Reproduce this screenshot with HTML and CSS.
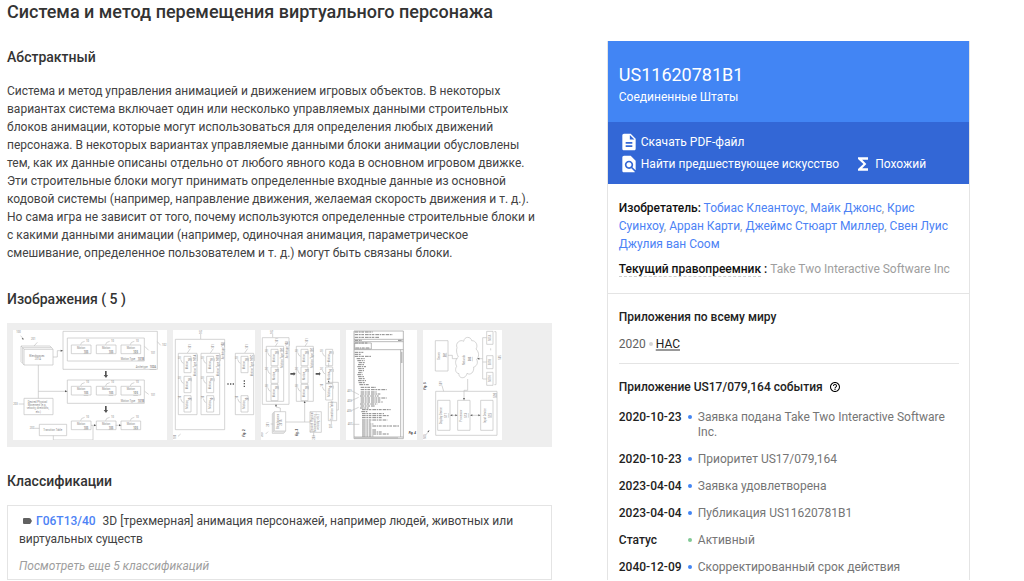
FILE: index.html
```html
<!DOCTYPE html>
<html lang="ru">
<head>
<meta charset="utf-8">
<meta name="viewport" content="width=device-width, initial-scale=1">
<title>US11620781B1</title>
<link rel="stylesheet" href="styles.css">
</head>
<body>
<svg class="defs" aria-hidden="true">
  <symbol id="motion" viewBox="0 0 76 46" overflow="visible">
    <path d="M8 18h59v26H8zM36 17q0-8 12-10"/>
    <text x="25" y="30">Motion</text><text x="45" y="41" class="u">105</text><text x="52" y="8">10</text>
  </symbol>
  <symbol id="vmotion" viewBox="0 0 40 60" overflow="visible">
    <path d="M14 8h21v49H14zM13 29q-6 0-9-12"/>
    <text transform="translate(26 47) rotate(-90)">Motion</text><text transform="translate(34 23) rotate(-90)" class="u">10</text><text transform="translate(5 17) rotate(-90)">10</text>
  </symbol>
</svg>
<main class="page">
  <h1 class="title">Система и метод перемещения виртуального персонажа</h1>
  <div class="columns">
    <div class="content">
      <section class="abstract">
        <h2 class="heading">Абстрактный</h2>
        <p class="text">Система и метод управления анимацией и движением игровых объектов. В некоторых вариантах система включает один или несколько управляемых данными строительных блоков анимации, которые могут использоваться для определения любых движений персонажа. В некоторых вариантах управляемые данными блоки анимации обусловлены тем, как их данные описаны отдельно от любого явного кода в основном игровом движке. Эти строительные блоки могут принимать определенные входные данные из основной кодовой системы (например, направление движения, желаемая скорость движения и т. д.). Но сама игра не зависит от того, почему используются определенные строительные блоки и с какими данными анимации (например, одиночная анимация, параметрическое смешивание, определенное пользователем и т. д.) могут быть связаны блоки.</p>
      </section>
      <section class="images">
        <h2 class="heading">Изображения ( 5 )</h2>
        <div class="strip">
          <svg class="figure" width="154" height="110" viewBox="39 45 462 330" role="img" aria-label="Fig. 1">
            <path d="M189 49h283v114H189zM202 69h231v69H202zM202 195h231v70H202zM72 103h87v47H72zM72 103l-4-5v47l4 5M68 98h87l4 5M68 98l-5-5v47l5 5M63 93h87l5 5M72 250h87v49H72zM118 328h82v34h-82z"/>
            <path d="M159 126h13v-19h17M115 150v100M115 229h87M273 331h15M347 331h17M160 362v13h119v-44M112 82l-10 11M434 94l12 12M472 80l10 11M434 229l12 9M56 267h16M100 340h18M62 62l8 10"/>
            <path class="solid" d="M315 168h5v12h4l-6 9-7-9h4zM315 273h5v12h4l-6 9-7-9h4zM189 107l-7-3v6zM202 229l-7-3v6zM289 331l-7-3v6zM364 331l-7-3v6zM71 74l-6-2 4-4z"/>
            <use href="#motion" x="206" y="72" width="76" height="46"/><use href="#motion" x="281" y="72" width="76" height="46"/><use href="#motion" x="355" y="72" width="76" height="46"/>
            <use href="#motion" x="206" y="196" width="76" height="46"/><use href="#motion" x="281" y="196" width="76" height="46"/><use href="#motion" x="355" y="196" width="76" height="46"/>
            <use href="#motion" x="206" y="300" width="76" height="46"/><use href="#motion" x="281" y="300" width="76" height="46"/><use href="#motion" x="355" y="300" width="76" height="46"/>
            <text x="49" y="53">100</text><text x="93" y="75">201</text><text x="452" y="116">101</text><text x="486" y="94">102</text><text x="452" y="242">101</text><text x="40" y="270">203</text><text x="89" y="343">207</text>
            <text x="88" y="125">Blendspaces</text><text x="104" y="136">201A</text>
            <text x="362" y="134">Motion Type</text><text x="413" y="134" class="u">101B</text><text x="407" y="159">Archetype</text><text x="449" y="159" class="u">102A</text><text x="362" y="260">Motion Type</text><text x="413" y="260" class="u">101B</text>
            <text x="83" y="263">Desired Physical</text><text x="83" y="273">Movement (e.g.,</text><text x="80" y="283">velocity, directions,</text><text x="107" y="293">etc.)</text><text x="130" y="348">Transition Table</text>
          </svg>
          <svg class="figure" width="82" height="110" viewBox="24 45 246 330" role="img" aria-label="Fig. 2">
            <path d="M31 73h148v271H31zM40 115h56v184H40zM108 115h56v184h-56zM211 115h55v184h-55zM107 57v15M76 101l-9 13M145 101l-9 13M248 101l-9 13M39 364l8-7"/>
            <path class="solid" d="M187 205h4v4h-4zM195 205h4v4h-4zM203 205h4v4h-4zM236 196h4v4h-4zM236 204h4v4h-4zM236 212h4v4h-4z"/>
            <use href="#vmotion" x="43" y="116" width="40" height="60"/><use href="#vmotion" x="43" y="176" width="40" height="60"/><use href="#vmotion" x="43" y="234" width="40" height="60"/>
            <use href="#vmotion" x="111" y="116" width="40" height="60"/><use href="#vmotion" x="111" y="176" width="40" height="60"/><use href="#vmotion" x="111" y="234" width="40" height="60"/>
            <use href="#vmotion" x="214" y="116" width="40" height="60"/><use href="#vmotion" x="214" y="234" width="40" height="60"/>
            <text transform="translate(94 184) rotate(-90)">Motion Type <tspan class="u">101A</tspan></text><text transform="translate(162 184) rotate(-90)">Motion Type <tspan class="u">101B</tspan></text><text transform="translate(264 184) rotate(-90)">Motion Type <tspan class="u">101C</tspan></text><text transform="translate(176 133) rotate(-90)">Archetype <tspan class="u">102</tspan></text>
            <text transform="translate(110 57) rotate(-90)">102</text><text transform="translate(79 101) rotate(-90)">101</text><text transform="translate(148 101) rotate(-90)">101</text><text transform="translate(250 101) rotate(-90)">101</text><text transform="translate(32 373) rotate(-90)">100</text><text class="fig" transform="translate(239 365) rotate(-90)">Fig. 2</text>
          </svg>
          <svg class="figure" width="79" height="110" viewBox="288 45 237 330" role="img" aria-label="Fig. 3">
            <path d="M292 68h80v200h-80zM304 94h52v165h-52zM394 94h51v165h-51zM328 290h34v58h-34zM328 290l-3 3v58h34l3-3M325 293l-3 4v58h34l3-4M435 290h34v62h-34zM490 262h25v55h-25z"/>
            <path d="M346 290v-11l-13-3v-8M362 321h73M419 321v-62M491 202h29v83h-5M323 57v10M338 83l-7 11M427 83l-7 11M491 156v-13M491 208v-12M317 327h8M446 352v13M499 317v11M302 357l7-7"/>
            <path class="solid" d="M376 174h10v-3l6 5-6 6v-3h-10zM452 174h10v-3l5 5-5 6v-3h-10zM419 258l-3 6h6zM333 268l-3 6h6zM491 197l-3 5h6z"/>
            <use href="#vmotion" x="304" y="95" width="40" height="60"/><use href="#vmotion" x="304" y="148" width="40" height="60"/><use href="#vmotion" x="304" y="200" width="40" height="60"/>
            <use href="#vmotion" x="394" y="95" width="40" height="60"/><use href="#vmotion" x="394" y="148" width="40" height="60"/><use href="#vmotion" x="394" y="200" width="40" height="60"/>
            <use href="#vmotion" x="468" y="95" width="40" height="60"/><use href="#vmotion" x="468" y="148" width="40" height="60"/><use href="#vmotion" x="468" y="198" width="40" height="60"/>
            <text transform="translate(369 130) rotate(-90)">Archetype <tspan class="u">102</tspan></text><text transform="translate(353 158) rotate(-90)">Motion Type <tspan class="u">101</tspan></text><text transform="translate(443 158) rotate(-90)">Motion Type <tspan class="u">101</tspan></text>
            <text transform="translate(342 342) rotate(-90)">Blendspaces</text><text transform="translate(352 332) rotate(-90)">201A</text><text transform="translate(445 350) rotate(-90)">Desired Physical</text><text transform="translate(453 350) rotate(-90)">Movement (e.g.,</text><text transform="translate(461 344) rotate(-90)">velocity, etc.)</text><text transform="translate(505 315) rotate(-90)">Transition Table</text>
            <text transform="translate(325 57) rotate(-90)">102</text><text transform="translate(340 83) rotate(-90)">101</text><text transform="translate(429 83) rotate(-90)">101</text><text transform="translate(312 335) rotate(-90)">201</text><text transform="translate(295 366) rotate(-90)">200</text><text transform="translate(449 374) rotate(-90)">203</text><text transform="translate(502 340) rotate(-90)">207</text><text class="fig" transform="translate(400 363) rotate(-90)">Fig. 3</text>
          </svg>
          <svg class="figure" width="71" height="110" viewBox="18 45 213 330" role="img" aria-label="Fig. 4">
            <path class="window" d="M42 48h148v323H42zM42 73h148M42 80h148M44 84h50v18H44zM42 104h148M182 104v262M42 366h148"/>
            <path class="bar" d="M185 110v34M44 369h130"/>
            <path class="rows" d="M44 51h54M44 59h114M44 67h74M44 76h22M174 76h14M44 84h38M46 99h44M44 112h26M44 118h20M44 124h50M50 131h24M52 137h22M56 143h18M54 149h20M52 155h26M54 161h18M56 167h16M54 173h14M52 179h16M54 185h18M56 191h20M54 197h24M56 203h18M58 209h28M62 217h46M62 224h78M62 231h48M62 237h60M60 243h56M62 249h78M62 255h62M62 261h66M60 267h52M62 273h42M60 279h26M66 284h86M64 290h18M66 296h66M66 302h80M66 308h60M66 315h76M66 321h26M66 327h34M66 333h112M66 339h30M66 345h44M66 351h60M66 357h80M66 363h34"/>
            <path d="M34 227l23 12M34 257l22-10M34 287l22-10M35 328h23"/>
            <text x="22" y="230">401</text><text x="22" y="260">403</text><text x="21" y="290">405</text><text x="23" y="331">407</text><text class="fig" x="206" y="358">Fig. 4</text>
          </svg>
          <svg class="figure" width="79" height="110" viewBox="251 45 237 330" role="img" aria-label="Fig. 5">
            <path d="M288 77h38v91h-38zM442 49h19v39h-19zM442 122h19v39h-19zM442 172h19v39h-19zM289 229h184v132H289zM295 256h37v90h-37zM355 256h37v90h-37zM424 256h37v90h-37z"/>
            <path d="M353 98c-6-14 10-26 20-19 2-16 22-15 24-2 13-1 20 15 13 25 11 11 9 24 2 31 6 12-2 22-9 23 2 16-10 26-20 19-4 19-26 16-24 1-12-2-12-15-7-22-6-11-3-22 5-28-5-10-7-19-4-28z"/>
            <path d="M326 121h13v10h15M414 131h16M442 68h-12v124h12M430 141h12M385 192v34h-11v30M332 301h23M392 301h32M465 50h5v159h-5M308 212l5 17M259 360l11-13M454 100v6"/>
            <path class="solid" d="M333 301l6-3v6zM354 301l-6-3v6zM393 301l6-3v6zM423 301l-6-3v6zM374 255l-3-6h6zM414 131l6-3v6zM270 346l-6 3 4 3z"/>
            <text transform="translate(301 134) rotate(-90)">Server</text><text transform="translate(319 127) rotate(-90)" class="u">501</text><text transform="translate(378 150) rotate(-90)">Network</text><text transform="translate(395 139) rotate(-90)" class="u">503</text>
            <text transform="translate(455 78) rotate(-90)">507A</text><text transform="translate(455 151) rotate(-90)">507B</text><text transform="translate(455 201) rotate(-90)">507N</text><text transform="translate(485 134) rotate(-90)">505</text><text transform="translate(469 248) rotate(-90)" class="u">510</text>
            <text transform="translate(309 328) rotate(-90)">Display Device</text><text transform="translate(324 308) rotate(-90)" class="u">511</text><text transform="translate(369 320) rotate(-90)">Processor</text><text transform="translate(384 308) rotate(-90)" class="u">513</text><text transform="translate(439 324) rotate(-90)">Input Device</text><text transform="translate(454 308) rotate(-90)" class="u">515</text><text transform="translate(308 212) rotate(-90)">509</text><text transform="translate(259 372) rotate(-90)">500</text><text class="fig" transform="translate(261 224) rotate(-90)">Fig. 5</text>
          </svg>
        </div>
      </section>
      <section class="classes">
        <h2 class="heading">Классификации</h2>
        <div class="class-box">
          <p class="class-line"><svg class="tag" width="9" height="6" viewBox="0 0 9 6" aria-hidden="true"><path d="M1 0h5q1 0 1.500.5L9 3 7.500 5.500Q7 6 6 6H1Q0 6 0 5V1Q0 0 1 0z"/></svg><a class="code" href="#class">Г06Т13/40</a>3D [трехмерная] анимация персонажей, например людей, животных или виртуальных существ</p>
          <a class="more" href="#all">Посмотреть еще 5 классификаций</a>
        </div>
      </section>
    </div>
    <aside class="card">
      <header class="card-head">
        <h2 class="number">US11620781B1</h2>
        <p class="country">Соединенные Штаты</p>
      </header>
      <nav class="actions">
        <a class="action" href="#pdf"><svg width="20" height="20" viewBox="0 0 24 24" aria-hidden="true"><path d="M14 2H6c-1.100 0-2 .9-2 2v16c0 1.100.9 2 2 2h12c1.100 0 2-.9 2-2V8l-6-6zm2 16H8v-2h8v2zm0-4H8v-2h8v2zm-3-5V3.500L18.500 9H13z"/></svg>Скачать PDF-файл</a>
        <div class="action-row">
          <a class="action" href="#prior"><svg width="20" height="20" viewBox="0 0 24 24" aria-hidden="true"><path d="M20 19.590V8l-6-6H6c-1.100 0-1.990.9-1.990 2L4 20c0 1.100.890 2 1.990 2H18c.450 0 .850-.150 1.190-.400l-4.430-4.430c-.800.520-1.740.830-2.760.830-2.760 0-5-2.240-5-5s2.240-5 5-5 5 2.240 5 5c0 1.020-.310 1.960-.830 2.750L20 19.590zM9 13c0 1.660 1.340 3 3 3s3-1.340 3-3-1.340-3-3-3-3 1.340-3 3z"/></svg>Найти предшествующее искусство</a>
          <a class="action" href="#similar"><svg width="20" height="20" viewBox="0 0 24 24" aria-hidden="true"><path d="M18 4H6v2l6.500 6L6 18v2h12v-3h-7l5-5-5-5h7z"/></svg>Похожий</a>
        </div>
      </nav>
      <div class="people">
        <p class="inventors"><b>Изобретатель:</b> <a href="#i1">Тобиас Клеантоус</a>, <a href="#i2">Майк Джонс</a>, <a href="#i3">Крис Суинхоу</a>, <a href="#i4">Арран Карти</a>, <a href="#i5">Джеймс Стюарт Миллер</a>, <a href="#i6">Свен Луис</a> <a href="#i7">Джулия ван Соом</a></p>
        <p class="assignee"><b><span class="hint">Текущий правопреемник</span> :</b> Take Two Interactive Software Inc</p>
      </div>
      <div class="details">
        <section class="world">
          <h3 class="subheading">Приложения по всему миру</h3>
          <p class="year">2020 <i class="sep"></i> <a class="place" href="#us">НАС</a></p>
        </section>
        <h3 class="subheading events-title">Приложение US17/079,164 события
          <svg width="12" height="12" viewBox="0 0 24 24" aria-hidden="true"><path d="M11 18h2v-2h-2v2zm1-16C6.480 2 2 6.480 2 12s4.480 10 10 10 10-4.480 10-10S17.520 2 12 2zm0 18c-4.410 0-8-3.590-8-8s3.590-8 8-8 8 3.590 8 8-3.590 8-8 8zm0-14c-2.210 0-4 1.790-4 4h2c0-1.100.9-2 2-2s2 .9 2 2c0 2-3 1.750-3 5h2c0-2.250 3-2.500 3-5 0-2.210-1.790-4-4-4z"/></svg></h3>
        <ul class="events">
          <li class="event"><b>2020-10-23</b><span>Заявка подана Take Two Interactive Software Inc.</span></li>
          <li class="event"><b>2020-10-23</b><span>Приоритет US17/079,164</span></li>
          <li class="event"><b>2023-04-04</b><span>Заявка удовлетворена</span></li>
          <li class="event"><b>2023-04-04</b><span>Публикация US11620781B1</span></li>
          <li class="event active"><b>Статус</b><span>Активный</span></li>
          <li class="event"><b>2040-12-09</b><span>Скорректированный срок действия</span></li>
        </ul>
      </div>
    </aside>
  </div>
</main>
</body>
</html>
```
FILE: styles.css
```css
* { box-sizing: border-box; }
body { margin: 0; background: #fff; color: #424242; font: 12px/18px Roboto, "Noto Sans", sans-serif; }
h1, h2, h3, p, ul { margin: 0; padding: 0; }
h1, h2, h3, b { font-weight: 500; }
a { color: #4c82f5; text-decoration: none; }
.defs { display: none; }

.page { padding: 0 54px 0 7px; }
.title { font-size: 18px; line-height: 24px; color: #333; }
.columns { display: grid; grid-template-columns: 3fr 2fr; column-gap: 55px; padding-top: 17px; }
.content { padding-top: 6px; min-width: 0; }
.heading { font-size: 14px; line-height: 20px; color: #333; }
.abstract .text { margin-top: 15px; padding-right: 16px; }
.images { margin-top: 27px; }
.strip { display: flex; gap: 6px; margin-top: 14px; padding: 7px 6px; background: #eee; overflow: hidden; }
.figure { flex: none; background: #fff; fill: none; stroke: #c0c0c0; stroke-width: 2; }
.figure text, .defs text { fill: #888; stroke: none; font-size: 8px; }
.u { text-decoration: underline; font-weight: 700; }
.figure .fig { font-weight: 700; font-style: italic; fill: #333; font-size: 9px; }
.figure .solid { fill: #555; stroke: none; }
.figure .window { stroke: #999; }
.figure .bar { stroke: #bbb; stroke-width: 5; }
.figure .rows { stroke: #888; stroke-width: 3; stroke-dasharray: 11 2 5 2 8 3; }

.classes { margin-top: 24px; }
.class-box { margin-top: 14px; padding: 6px 11px 4px; border: 1px solid #e4e4e4; }
.tag { margin: 0 4px 1px; fill: #616161; }
.code { margin-right: 7px; font-weight: 500; }
.more { display: block; margin-top: 9px; color: #9e9e9e; font-style: italic; }

.card { border: 1px solid #e4e4e4; border-width: 0 1px; min-width: 0; }
.card-head { padding: 22px 11px 15px; background: #4285f4; color: #fff; }
.number { font-size: 18px; line-height: 24px; font-weight: 400; }
.country { line-height: 20px; }
.actions { padding: 9px 11px; background: #3367d6; }
.action { display: flex; align-items: center; gap: 2px; line-height: 22px; color: #fff; }
.action svg { fill: #fff; }
.action-row { display: flex; gap: 14px; }
.people { padding: 15px 11px; border-bottom: 1px solid #e4e4e4; color: #9e9e9e; }
.people b { color: #111; }
.assignee { margin-top: 7px; }
.hint { border-bottom: 1px dashed #ccc; }
.details { padding: 14px 10px 5px 11px; }
.subheading { font-size: 12px; line-height: 18px; color: #222; }
.world { padding-bottom: 10px; border-bottom: 1px solid #e4e4e4; }
.year { margin-top: 9px; color: #616161; }
.sep { display: inline-block; width: 4px; height: 4px; margin-bottom: 2px; border-radius: 50%; background: #d5d5d5; }
.place { color: #222; text-decoration: underline 2px #999; text-underline-offset: 1px; }
.events-title { display: flex; align-items: center; gap: 6px; margin-top: 14px; }
.events { display: grid; gap: 12px; margin-top: 14px; list-style: none; line-height: 15px; }
.event { display: grid; grid-template-columns: 69px 1fr; color: #757575; }
.event b { color: #222; }
.event span { position: relative; padding-left: 10px; }
.event span::before { content: ""; position: absolute; left: 0; top: 5px; width: 4px; height: 4px; border-radius: 50%; background: #4285f4; }
.active span::before { background: #81c995; }
```
